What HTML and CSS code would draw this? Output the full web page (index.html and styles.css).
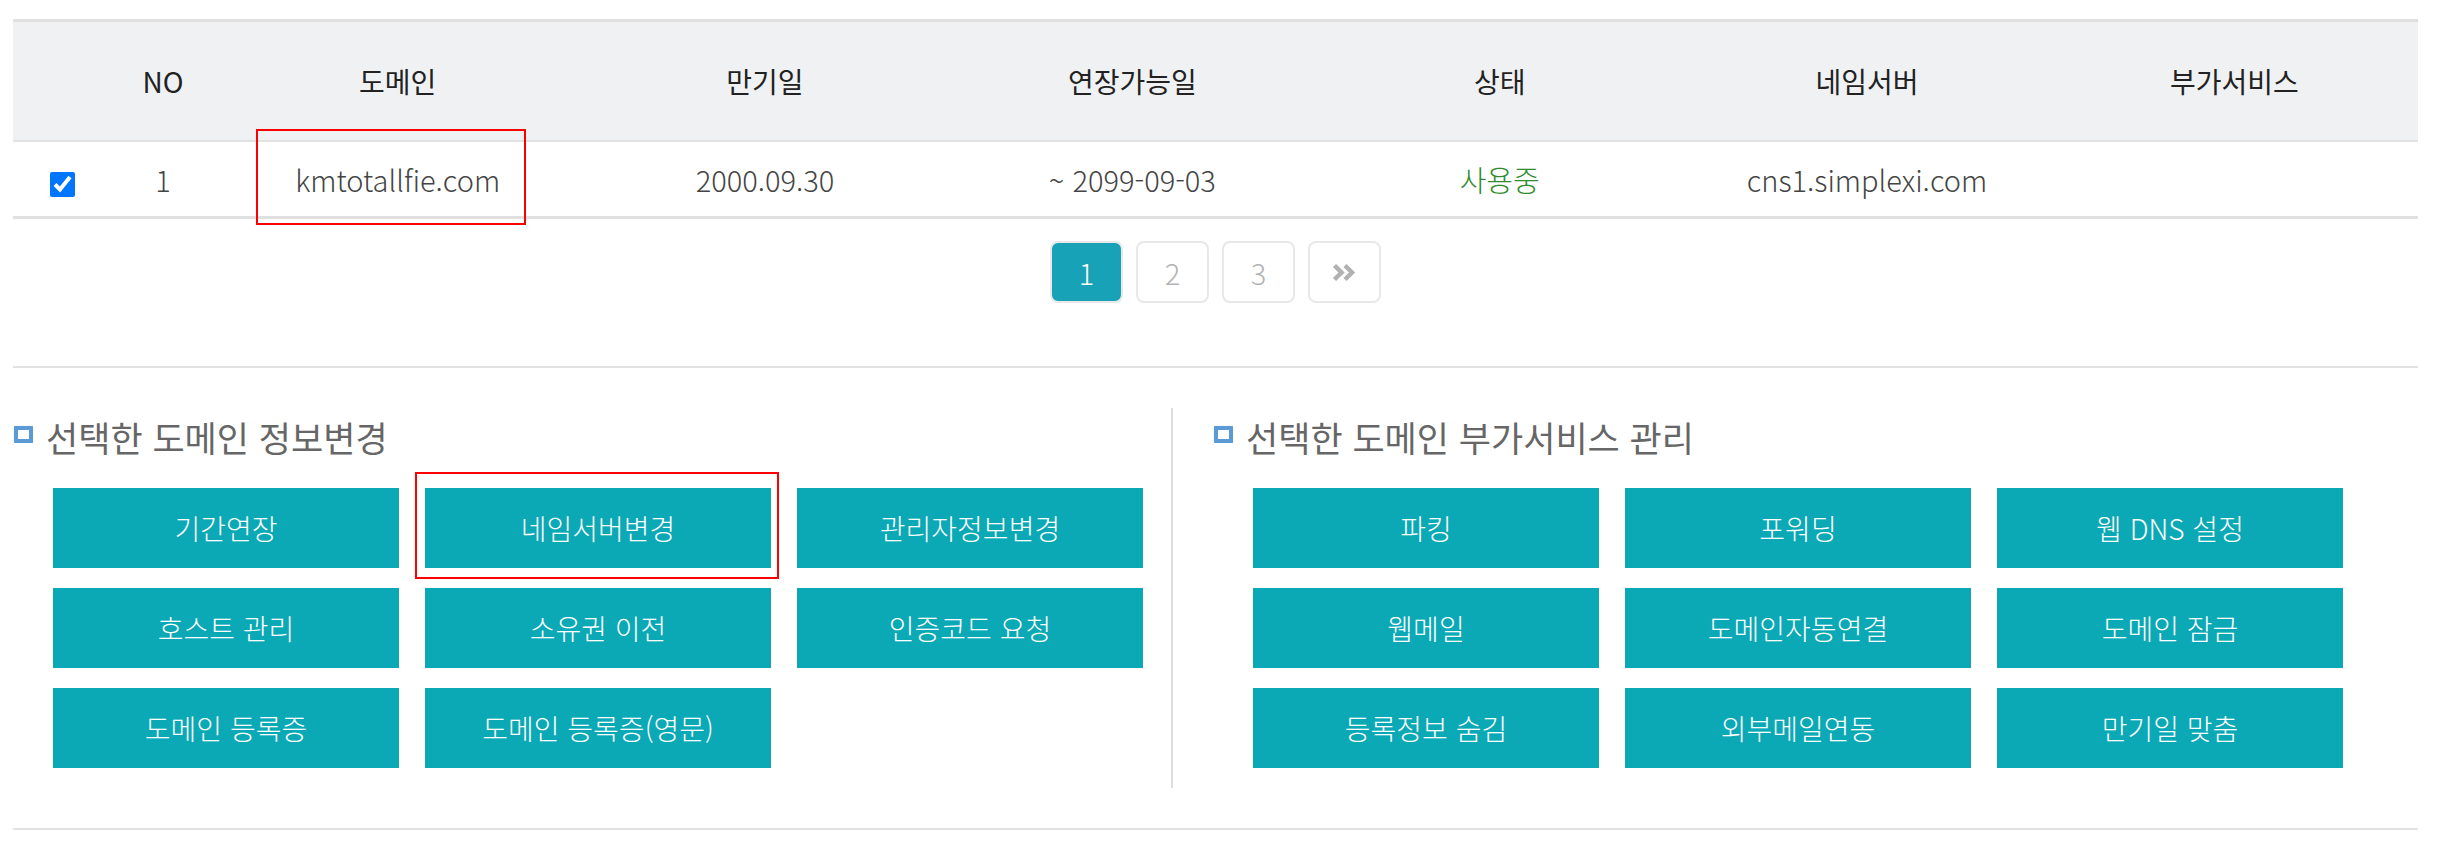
FILE: index.html
```html
<!DOCTYPE html>
<html lang="ko">
<head>
<meta charset="utf-8">
<title>도메인 관리</title>
<link rel="stylesheet" href="styles.css">
</head>
<body>
<div class="page">
  <table class="domains">
    <colgroup>
      <col class="c-check"><col class="c-no"><col><col><col><col><col><col>
    </colgroup>
    <thead>
      <tr>
        <th></th><th>NO</th><th>도메인</th><th>만기일</th><th>연장가능일</th><th>상태</th><th>네임서버</th><th>부가서비스</th>
      </tr>
    </thead>
    <tbody>
      <tr>
        <td><input type="checkbox" class="chk" checked></td>
        <td>1</td>
        <td>kmtotallfie.com</td>
        <td>2000.09.30</td>
        <td>~ 2099-09-03</td>
        <td class="status">사용중</td>
        <td>cns1.simplexi.com</td>
        <td></td>
      </tr>
    </tbody>
  </table>

  <nav class="pager">
    <a class="pg active">1</a>
    <a class="pg">2</a>
    <a class="pg">3</a>
    <a class="pg"><svg width="26" height="19" viewBox="0 0 26 19"><path d="M2.5 2.5 L9.5 9.5 L2.5 16.5 M13 2.5 L20 9.5 L13 16.5" fill="none" stroke="#b2b2b2" stroke-width="4.5" stroke-linejoin="miter"/></svg></a>
  </nav>

  <div class="sections">
    <section class="panel left">
      <h2 class="title"><span class="sq"></span>선택한 도메인 정보변경</h2>
      <div class="btns">
        <a class="btn">기간연장</a>
        <a class="btn">네임서버변경</a>
        <a class="btn">관리자정보변경</a>
        <a class="btn">호스트 관리</a>
        <a class="btn">소유권 이전</a>
        <a class="btn">인증코드 요청</a>
        <a class="btn">도메인 등록증</a>
        <a class="btn">도메인 등록증(영문)</a>
      </div>
    </section>
    <section class="panel right">
      <h2 class="title"><span class="sq"></span>선택한 도메인 부가서비스 관리</h2>
      <div class="btns">
        <a class="btn">파킹</a>
        <a class="btn">포워딩</a>
        <a class="btn">웹 DNS 설정</a>
        <a class="btn">웹메일</a>
        <a class="btn">도메인자동연결</a>
        <a class="btn">도메인 잠금</a>
        <a class="btn">등록정보 숨김</a>
        <a class="btn">외부메일연동</a>
        <a class="btn">만기일 맞춤</a>
      </div>
    </section>
  </div>
  <div class="bottom-line"></div>
</div>

<div class="mark mark-domain"></div>
<div class="mark mark-ns"></div>
</body>
</html>
```

FILE: styles.css
```css
* { box-sizing: border-box; }

body {
  margin: 0;
  background: #fff;
  font-family: "Noto Sans CJK KR", "Noto Sans", sans-serif;
}

.thin,
.domains td,
.pg,
.btn {
  font-family: "Noto Sans CJK KR Light", "Noto Sans CJK KR DemiLight", "Noto Sans CJK KR", sans-serif;
  font-weight: 300;
}

.page {
  width: 2405px;
  margin: 19px 0 0 13px;
}

.domains {
  width: 2405px;
  table-layout: fixed;
  border-collapse: separate;
  border-spacing: 0;
}
.domains .c-check { width: 99px; }
.domains .c-no { width: 102px; }

.domains th,
.domains td {
  box-sizing: content-box;
  padding: 0;
  text-align: center;
  vertical-align: middle;
}
.domains th {
  height: 118px;
  background: #f0f1f3;
  border-top: 3px solid #e0e0e0;
  border-bottom: 2px solid #e2e2e2;
  font-size: 28px;
  font-weight: 400;
  color: #222;
}
.domains td {
  height: 74px;
  border-bottom: 3px solid #e0e0e0;
  font-size: 29px;
  color: #444;
}
.domains td.status { color: #2e8b2e; }

.chk {
  width: 25px;
  height: 25px;
  margin: 0;
  vertical-align: middle;
  accent-color: #0075ff;
}

.pager {
  display: flex;
  justify-content: center;
  gap: 13px;
  margin-top: 22px;
}
.pg {
  width: 73px;
  height: 62px;
  border: 2px solid #e8e8e8;
  border-radius: 8px;
  display: flex;
  align-items: center;
  justify-content: center;
  font-size: 29px;
  color: #b3b3b3;
  background: #fff;
}
.pg.active {
  background: #17a2b8;
  color: #fff;
}

.sections {
  display: flex;
  margin-top: 63px;
  border-top: 2px solid #e2e2e2;
  padding-top: 40px;
}
.panel {
  padding-bottom: 20px;
}
.panel.left {
  width: 1160px;
  border-right: 2px solid #dddddd;
  padding-left: 1px;
}
.panel.right {
  flex: 1;
  padding-left: 41px;
}

.title {
  display: flex;
  align-items: center;
  gap: 13px;
  height: 56px;
  margin: 0;
  font-size: 35px;
  font-weight: 400;
  color: #666;
}
.sq {
  width: 19px;
  height: 17px;
  border: 4px solid #5b9bd5;
  border-radius: 1px;
  background: #fff;
  box-shadow: 0 0 1px #9cc3ea;
  margin-top: -4px;
}

.btns {
  display: grid;
  grid-template-columns: repeat(3, 346px);
  grid-auto-rows: 80px;
  column-gap: 26px;
  row-gap: 20px;
  margin: 24px 0 0 39px;
}
.btn {
  display: flex;
  align-items: center;
  justify-content: center;
  background: #0ba8b6;
  color: #fff;
  font-size: 28px;
}

.bottom-line {
  margin-top: 40px;
  height: 2px;
  background: #e2e2e2;
}

.mark {
  position: absolute;
  border: 2px solid #ff0000;
}
.mark-domain {
  left: 256px;
  top: 129px;
  width: 270px;
  height: 96px;
}
.mark-ns {
  left: 415px;
  top: 472px;
  width: 364px;
  height: 107px;
}
```
